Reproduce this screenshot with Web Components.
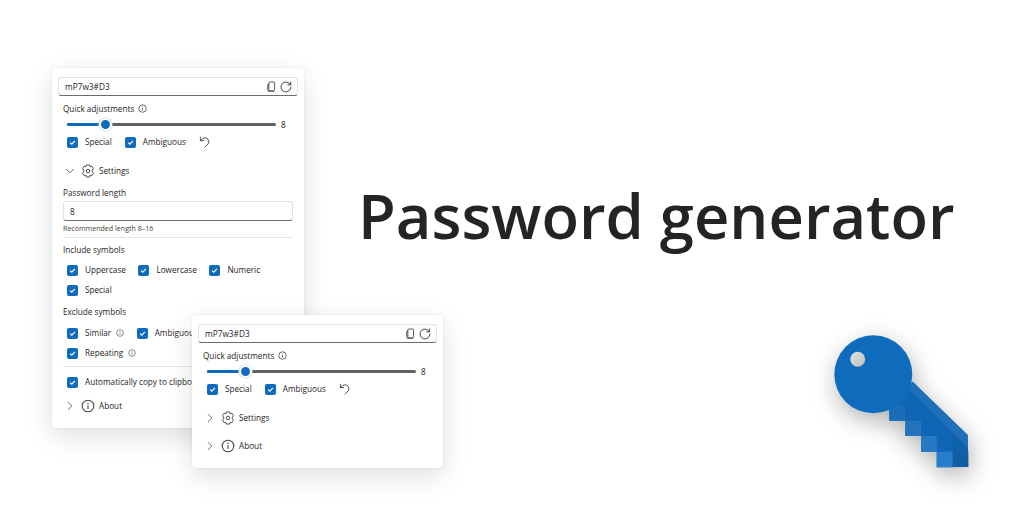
<!DOCTYPE html>
<html lang="en">
<head>
<meta charset="utf-8">
<title>Password generator</title>
<style>
html,body{margin:0;padding:0;background:#fff}
body{font-family:"Open Sans","Noto Sans","Liberation Sans",sans-serif;color:#242424}
pg-canvas{--accent:#0f6cbd}
</style>
</head>
<body>
<pg-canvas>
  <pg-panel style="left:52px;top:68px;width:252px">
    <pg-field></pg-field>
    <pg-quick></pg-quick>
    <pg-expander open icon="gear" style="margin-top:12px">Settings</pg-expander>
    <pg-label style="margin-top:5px">Password length</pg-label>
    <pg-input value="8" style="margin-top:1px"></pg-input>
    <pg-hint style="margin-top:1px">Recommended length 8–16</pg-hint>
    <pg-divider style="margin-top:3px"></pg-divider>
    <pg-label style="margin-top:5px">Include symbols</pg-label>
    <pg-checks style="margin-top:6px">
      <pg-check>Uppercase</pg-check>
      <pg-check>Lowercase</pg-check>
      <pg-check>Numeric</pg-check>
      <pg-check>Special</pg-check>
    </pg-checks>
    <pg-label style="margin-top:8px">Exclude symbols</pg-label>
    <pg-checks style="margin-top:7px">
      <pg-check info>Similar</pg-check>
      <pg-check>Ambiguous</pg-check>
      <pg-check info style="flex-basis:100%">Repeating</pg-check>
    </pg-checks>
    <pg-divider style="margin-top:6px"></pg-divider>
    <pg-checks style="margin-top:8px">
      <pg-check>Automatically copy to clipboard</pg-check>
    </pg-checks>
    <pg-expander icon="info" style="margin-top:7px;margin-bottom:12px">About</pg-expander>
  </pg-panel>

  <pg-title>Password generator</pg-title>

  <pg-panel style="left:192px;top:315px;width:251px">
    <pg-field></pg-field>
    <pg-quick></pg-quick>
    <pg-expander icon="gear" style="margin-top:12px">Settings</pg-expander>
    <pg-expander icon="info" style="margin-top:8px;margin-bottom:12px">About</pg-expander>
  </pg-panel>

  <pg-key></pg-key>
</pg-canvas>

<script>
const ICONS = {
  info:'<circle cx="6" cy="6" r="5" fill="none" stroke="currentColor" stroke-width=".9"/><circle cx="6" cy="3.8" r=".65" fill="currentColor"/><path d="M6 5.4v3.2" stroke="currentColor" stroke-width=".95" fill="none"/>',
  copy:'<path d="M4.4 1.1h3.7a1.3 1.3 0 0 1 1.3 1.3v6.9a1.3 1.3 0 0 1-1.3 1.3H4.4a1.3 1.3 0 0 1-1.3-1.3V2.4a1.3 1.3 0 0 1 1.3-1.3z" fill="none" stroke="currentColor" stroke-width=".9"/><path d="M3.1 2.8a1.5 1.5 0 0 0-1.2 1.4v5.3a2.4 2.4 0 0 0 2.4 2.3h3.3a1.5 1.5 0 0 0 1.3-.9" fill="none" stroke="currentColor" stroke-width=".9"/>',
  refresh:'<path d="M10.4 3.6A5 5 0 1 0 11 6" fill="none" stroke="currentColor" stroke-width=".9" stroke-linecap="round"/><path d="M10.7 1v2.9H7.8" fill="none" stroke="currentColor" stroke-width=".9" stroke-linecap="round" stroke-linejoin="round"/>',
  undo:'<path d="M1.4 1.2v3.4h3.4" fill="none" stroke="currentColor" stroke-width=".9" stroke-linecap="round" stroke-linejoin="round"/><path d="M1.6 4.5 3.7 2.7a3.8 3.8 0 0 1 5.6 5L6 11" fill="none" stroke="currentColor" stroke-width=".9" stroke-linecap="round"/>',
  right:'<path d="M4 1.8 8.2 6 4 10.2" fill="none" stroke="currentColor" stroke-width=".95" stroke-linecap="round" stroke-linejoin="round"/>',
  down:'<path d="M1.8 4 6 8.2 10.2 4" fill="none" stroke="currentColor" stroke-width=".95" stroke-linecap="round" stroke-linejoin="round"/>',
  gear:'<path d="M4.7.8 7.3.8 7.8 2.3 9.3 1.9 10.7 4.1 9.7 5.2 9.7 6.8 10.7 7.9 9.3 10.1 7.8 9.7 7.3 11.2 4.7 11.2 4.2 9.7 2.7 10.1 1.3 7.9 2.3 6.8 2.3 5.2 1.3 4.1 2.7 1.9 4.2 2.3Z" fill="none" stroke="currentColor" stroke-width=".8" stroke-linejoin="round"/><circle cx="6" cy="6" r="1.5" fill="none" stroke="currentColor" stroke-width=".8"/>'
};
function icon(name,size){
  return `<svg width="${size}" height="${size}" viewBox="0 0 12 12" aria-hidden="true" style="display:block;flex:none">${ICONS[name]}</svg>`;
}
function def(tag,css,html){
  class El extends HTMLElement{
    constructor(){
      super();
      this.attachShadow({mode:'open'});
    }
    connectedCallback(){
      const body = typeof html==='function'?html(this):html;
      this.shadowRoot.innerHTML = `<style>${css}</style>${body}`;
    }
  }
  customElements.define(tag,El);
}

def('pg-canvas',`:host{display:block;position:relative;width:1024px;height:513px;overflow:hidden;background:#fff}`,`<slot></slot>`);

def('pg-panel',`:host{position:absolute;display:flex;flex-direction:column;box-sizing:border-box;padding-top:9px;background:#fff;border-radius:4px;
  box-shadow:0 0 2px rgba(0,0,0,.10),0 8px 26px rgba(0,0,0,.13)}`,`<slot></slot>`);

def('pg-field',`:host{display:flex;align-items:center;box-sizing:border-box;height:19px;margin:0 6px;padding:0 5px 0 6px;
  border:1px solid #e1e1e1;border-bottom:1px solid #6b6b6b;border-radius:3px;font-size:8.3px;color:#242424}
  span{flex:1;margin-top:-1px}.i{display:flex;gap:3px;align-items:center;color:#333}`,
  ()=>`<span>mP7w3#D3</span><div class="i">${icon('copy',11)}${icon('refresh',12)}</div>`);

def('pg-label',`:host{display:flex;align-items:center;box-sizing:border-box;height:14px;padding-bottom:1px;margin-left:11px;font-size:8.2px;color:#242424}`,`<slot></slot>`);

def('pg-quick',`:host{display:block}
  .l{display:flex;align-items:center;gap:4px;box-sizing:border-box;height:14px;padding-bottom:1px;margin:6px 0 0 11px;font-size:8.2px}
  .s{display:flex;align-items:center;height:14px;margin:1px 0 0 15px}
  .t{position:relative;width:209px;height:3px;border-radius:2px;background:#616161;flex:none}
  .f{position:absolute;left:0;top:0;bottom:0;width:38px;background:var(--accent);border-radius:2px}
  .h{position:absolute;left:31.5px;top:-5px;box-sizing:border-box;width:13px;height:13px;border-radius:50%;background:var(--accent);border:2.5px solid #fff;box-shadow:0 0 0 .6px #d0d0d0}
  .v{margin-left:5px;font-size:8.2px}
  .c{display:flex;align-items:center;gap:13px;margin:4px 0 0 15px;height:14px}
  .u{color:#424242}`,
  ()=>`<div class="l">Quick adjustments ${icon('info',9)}</div>
  <div class="s"><div class="t"><div class="f"></div><div class="h"></div></div><span class="v">8</span></div>
  <div class="c"><pg-check>Special</pg-check><pg-check>Ambiguous</pg-check><span class="u">${icon('undo',12)}</span></div>`);

def('pg-check',`:host{display:inline-flex;align-items:center;gap:7px;height:14px;font-size:8.2px;color:#242424;white-space:nowrap}
  .b{flex:none;width:11px;height:11px;border-radius:2px;background:var(--accent);display:flex;align-items:center;justify-content:center}
  .n{display:inline-block;margin-left:1px;color:#424242}
  label{display:flex;align-items:center;gap:4px;margin-top:-1px}`,
  (el)=>`<span class="b"><svg width="7" height="7" viewBox="0 0 7 7"><path d="M1.1 3.7 2.8 5.2 5.9 1.9" fill="none" stroke="#fff" stroke-width="1.1"/></svg></span>
  <label><slot></slot>${el.hasAttribute('info')?`<span class="n">${icon('info',8)}</span>`:''}</label>`);

def('pg-checks',`:host{display:flex;flex-wrap:wrap;column-gap:12.5px;row-gap:6px;margin-left:15px;margin-right:0}`,`<slot></slot>`);

def('pg-expander',`:host{display:flex;align-items:center;height:20px;margin-left:13px;font-size:8.2px;color:#242424}
  .c{width:10px;margin-right:6px;color:#424242}.g{margin-right:4px;color:#424242}.t{margin-top:-1px}`,
  (el)=>`<span class="c">${icon(el.hasAttribute('open')?'down':'right',10)}</span><span class="g">${icon(el.getAttribute('icon'),14)}</span><span class="t"><slot></slot></span>`);

def('pg-input',`:host{display:flex;align-items:center;box-sizing:border-box;height:20px;margin:0 11px;padding:0 6px;
  border:1px solid #e1e1e1;border-bottom:1px solid #6b6b6b;border-radius:3px;font-size:8.3px}`,
  (el)=>`<span>${el.getAttribute('value')}</span>`);

def('pg-hint',`:host{display:flex;align-items:center;height:12px;margin-left:11px;font-size:7.1px;color:#424242}`,`<slot></slot>`);

def('pg-divider',`:host{display:block;height:1px;background:#e4e4e4;margin:0 11px}`,``);

def('pg-title',`:host{position:absolute;left:358px;top:172px;font-size:61.5px;line-height:86px;font-weight:600;color:#242424;white-space:nowrap}`,`<slot></slot>`);

def('pg-key',`:host{position:absolute;left:820px;top:325px;width:170px;height:160px;display:block}
  svg{display:block;overflow:visible;filter:drop-shadow(2px 8px 12px rgba(0,0,0,.3))}`,
  `<svg width="170" height="160" viewBox="0 0 170 160">
    <path d="M92.7 56.7 147.7 110 148.3 142 116.7 142.3 116.7 126.7 101 126.7 101 111 85.3 111 85.3 95.7 69.3 95.7 69.3 80Z" fill="#0f66b4"/>
    <path d="M92.7 56.7 147.7 110 147.7 122.7 88.3 63.3Z" fill="#1f70b9"/>
    <rect x="69.3" y="80" width="15.7" height="15.7" fill="#1a6db6"/>
    <rect x="85.3" y="95.7" width="15.7" height="15.3" fill="#2474bd"/>
    <rect x="101" y="111" width="15.7" height="15.7" fill="#2779c4"/>
    <rect x="116.7" y="126.7" width="16" height="15.6" fill="#2a7dcb"/>
    <path d="M132.7 126.7H148.3V142H132.7Z" fill="#115ea3"/>
    <path d="M132.7 107.7 147.7 122.7 148.3 126.7H132.7Z" fill="#0f61a9"/>
    <path fill-rule="evenodd" fill="#0f6cbd" d="M53.3 10.3a39 39 0 1 0 0 78 39 39 0 0 0 0-78ZM37.7 26.8a7.5 7.5 0 1 1 0 15 7.5 7.5 0 0 1 0-15Z"/>
  </svg>`);
</script>
</body>
</html>
